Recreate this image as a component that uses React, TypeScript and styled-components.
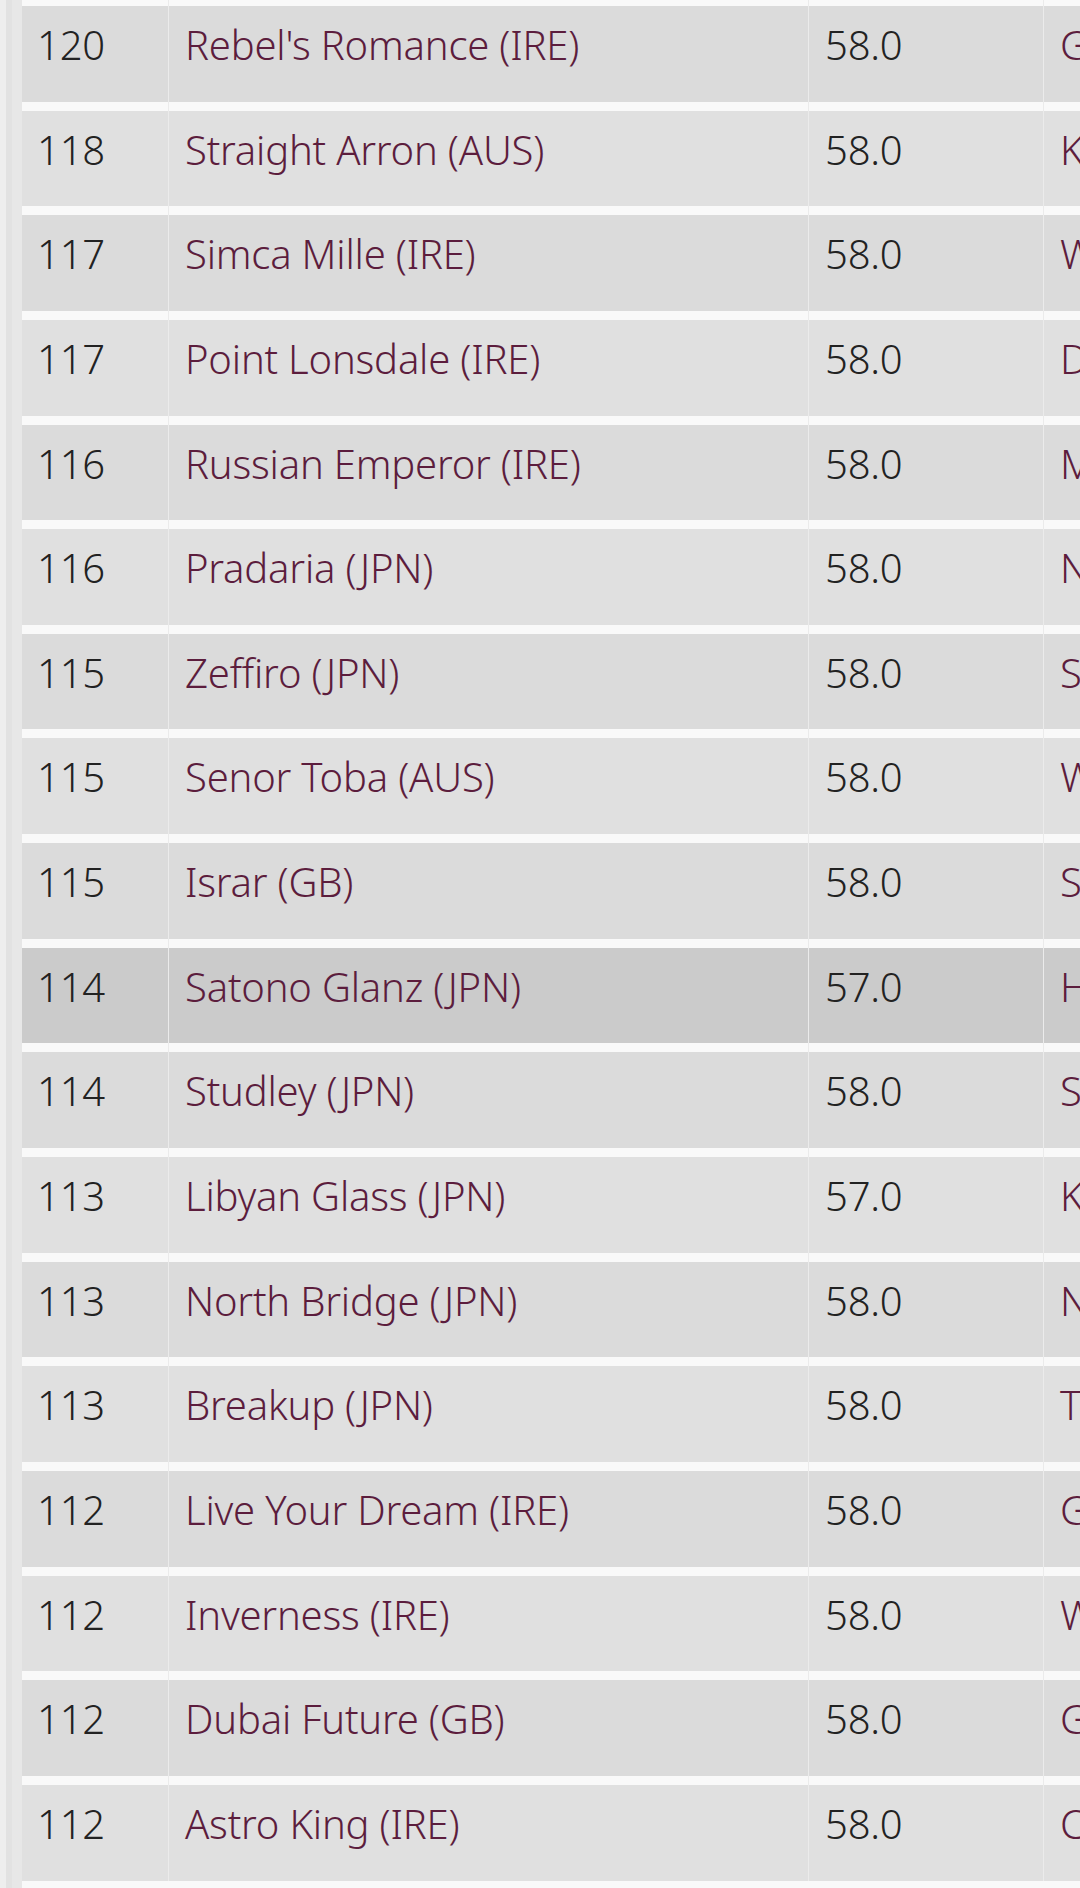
import React from "react";
import styled, { createGlobalStyle } from "styled-components";

const Global = createGlobalStyle`
  html, body { margin: 0; padding: 0; background: #f9f9f9; overflow: hidden; }
  body { width: 1080px; height: 1888px; }
`;

const Frame = styled.div`
  display: flex;
  width: 1080px;
  height: 1888px;
  overflow: hidden;
  background: #f9f9f9;
`;

const Rail = styled.div`
  flex: 0 0 22px;
  box-sizing: border-box;
  border-left: 6px solid #eeeeee;
  border-right: 10px solid #e7e7e7;
  background: #e2e2e2;
`;

const Table = styled.div`
  display: flex;
  flex-direction: column;
  margin-top: -3px;
  font-family: "Noto Sans", "Open Sans", sans-serif;
  font-size: 40px;
  font-weight: 350;
  letter-spacing: -0.2px;
`;

const Row = styled.div`
  display: grid;
  grid-template-columns: 146px 640px 235px 420px;
  height: 104.65px;
`;

const Cell = styled.div<{ $bg: string; $first?: boolean; $link?: boolean }>`
  box-sizing: border-box;
  padding: 21px 0 0 ${(p) => (p.$first ? 15 : 16)}px;
  border-left: ${(p) => (p.$first ? "none" : "1px solid #ebebeb")};
  background: linear-gradient(
    to bottom,
    #f9f9f9 0,
    #f9f9f9 9px,
    ${(p) => p.$bg} 9px,
    ${(p) => p.$bg} 100%
  );
  color: ${(p) => (p.$link ? "#5c1d3d" : "#222222")};
  white-space: nowrap;
  line-height: 54px;
`;

type Horse = { rating: number; name: string; weight: string; owner: string; hl?: boolean };

const horses: Horse[] = [
  { rating: 120, name: "Rebel's Romance (IRE)", weight: "58.0", owner: "Godolphin" },
  { rating: 118, name: "Straight Arron (AUS)", weight: "58.0", owner: "K. Pollard" },
  { rating: 117, name: "Simca Mille (IRE)", weight: "58.0", owner: "Wertheimer et Frere" },
  { rating: 117, name: "Point Lonsdale (IRE)", weight: "58.0", owner: "Derrick Smith" },
  { rating: 116, name: "Russian Emperor (IRE)", weight: "58.0", owner: "M. Magnier" },
  { rating: 116, name: "Pradaria (JPN)", weight: "58.0", owner: "Northern Racing" },
  { rating: 115, name: "Zeffiro (JPN)", weight: "58.0", owner: "Sunday Racing" },
  { rating: 115, name: "Senor Toba (AUS)", weight: "58.0", owner: "W. Wong" },
  { rating: 115, name: "Israr (GB)", weight: "58.0", owner: "Shadwell Estate" },
  { rating: 114, name: "Satono Glanz (JPN)", weight: "57.0", owner: "Hajime Satomi", hl: true },
  { rating: 114, name: "Studley (JPN)", weight: "58.0", owner: "Silk Racing" },
  { rating: 113, name: "Libyan Glass (JPN)", weight: "57.0", owner: "Kaneko Makoto" },
  { rating: 113, name: "North Bridge (JPN)", weight: "58.0", owner: "Northern Farm" },
  { rating: 113, name: "Breakup (JPN)", weight: "58.0", owner: "Teruya Yoshida" },
  { rating: 112, name: "Live Your Dream (IRE)", weight: "58.0", owner: "Godolphin" },
  { rating: 112, name: "Inverness (IRE)", weight: "58.0", owner: "Westerberg" },
  { rating: 112, name: "Dubai Future (GB)", weight: "58.0", owner: "Godolphin" },
  { rating: 112, name: "Astro King (IRE)", weight: "58.0", owner: "Coolmore" },
];

export default function App() {
  return (
    <>
      <Global />
      <Frame>
        <Rail />
        <Table>
          {horses.map((h, i) => {
            const bg = h.hl ? "#cbcbcb" : i % 2 === 0 ? "#dbdbdb" : "#e0e0e0";
            return (
              <Row key={i}>
                <Cell $bg={bg} $first>{h.rating}</Cell>
                <Cell $bg={bg} $link>{h.name}</Cell>
                <Cell $bg={bg}>{h.weight}</Cell>
                <Cell $bg={bg} $link>{h.owner}</Cell>
              </Row>
            );
          })}
        </Table>
      </Frame>
    </>
  );
}
